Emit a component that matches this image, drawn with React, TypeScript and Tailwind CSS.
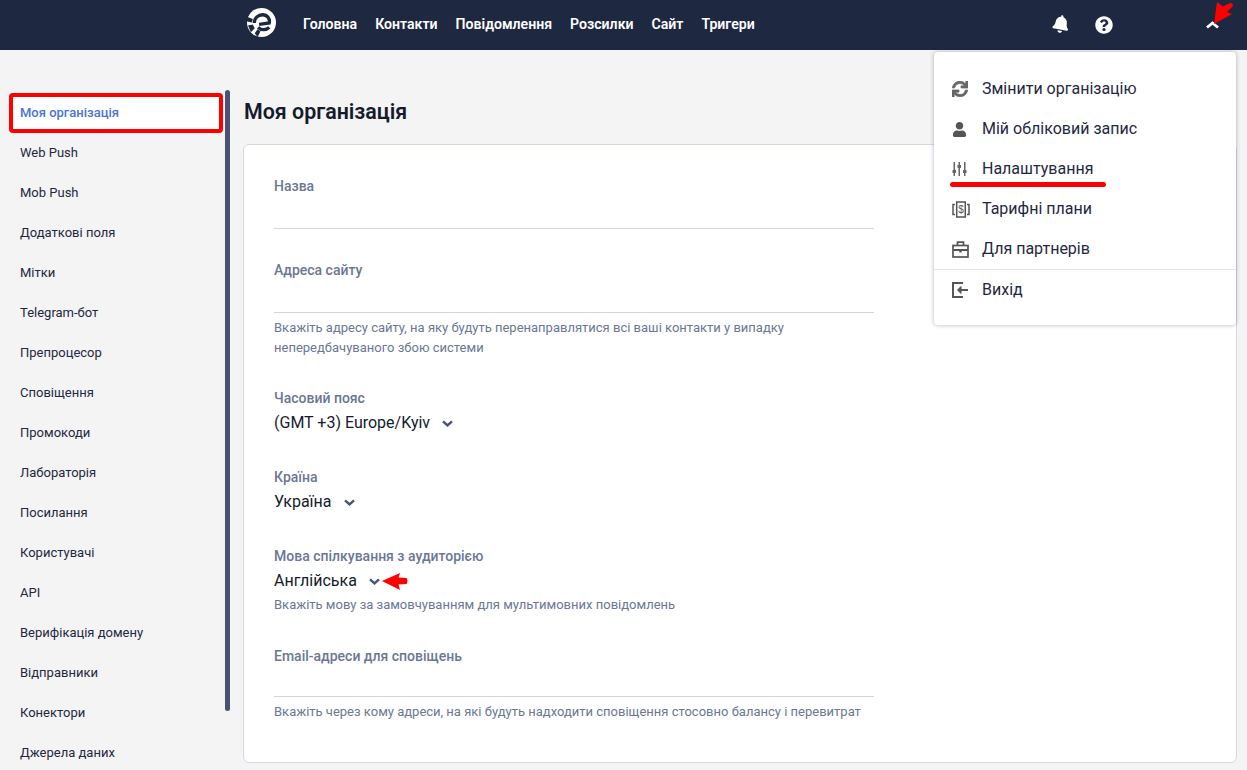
import React from "react";
import { FaBell, FaQuestionCircle, FaSync, FaUser } from "react-icons/fa";

const sideItems = ["Моя організація","Web Push","Mob Push","Додаткові поля","Мітки","Telegram-бот","Препроцесор","Сповіщення","Промокоди","Лабораторія","Посилання","Користувачі","API","Верифікація домену","Відправники","Конектори","Джерела даних"];
const nav = ["Головна","Контакти","Повідомлення","Розсилки","Сайт","Тригери"];

function Logo() {
  return (
    <svg width="29" height="29" viewBox="0 0 30 30" className="shrink-0 mb-[5px]">
      <circle cx="15" cy="15" r="15" fill="#fff" />
      <path d="M7.5 15.5 C7.5 10 12 7 16 7 C21 7 24 11 23 15.5 L12.5 17" fill="none" stroke="#1f2841" strokeWidth="3.4" />
      <path d="M11.5 20 C15 23.5 20 23 23 20" fill="none" stroke="#1f2841" strokeWidth="3.4" />
      <path d="M0 9 L6 11.5 L5 15 L0 14 Z M1 18 L6 17 L8 21 L4 25 Z M8 26 L11 22 L14 24 L11 30 Z" fill="#1f2841" />
    </svg>
  );
}

function Sliders() {
  return (
    <svg width="16" height="14" viewBox="0 0 16 14" fill="#666">
      <rect x="1.5" y="0" width="1.5" height="14" />
      <rect x="6.5" y="0" width="1.5" height="14" />
      <rect x="12" y="0" width="1.5" height="14" />
      <rect x="0.5" y="8" width="3.5" height="3" />
      <rect x="5.5" y="3" width="3.5" height="3" />
      <rect x="11" y="8" width="3.5" height="3" />
    </svg>
  );
}
function Money() {
  return (
    <svg width="18" height="17" viewBox="0 0 18 17" fill="none" stroke="#555" strokeWidth="1.5">
      <rect x="4.7" y="1" width="8.6" height="15" />
      <path d="M3 3.5H1V13.5H3M15 3.5H17V13.5H15" />
      <text x="9" y="12" fontSize="10" fill="#555" stroke="none" textAnchor="middle" fontFamily="Liberation Sans">$</text>
    </svg>
  );
}
function Case() {
  return (
    <svg width="17" height="17" viewBox="0 0 17 17" fill="none" stroke="#555" strokeWidth="1.7">
      <rect x="1" y="4.5" width="15" height="11.5" />
      <path d="M5.5 4.5V1.2H11.5V4.5" />
      <path d="M1 9H16" strokeWidth="2" />
      <rect x="7.3" y="8.5" width="2.4" height="3" fill="#555" stroke="none" />
    </svg>
  );
}
function Exit() {
  return (
    <svg width="17" height="16" viewBox="0 0 17 16" fill="none" stroke="#555" strokeWidth="2">
      <path d="M11 1H1V15H11" />
      <path d="M16 8H7" />
      <path d="M9 4.5L5.5 8L9 11.5Z" fill="#555" strokeWidth="1" />
    </svg>
  );
}
function ChevronDown() {
  return (
    <svg width="11" height="7" viewBox="0 0 11 7" fill="none" stroke="#4a5372" strokeWidth="2.4" className="ml-3 mt-px">
      <path d="M1 1.3L5.5 5.3L10 1.3" />
    </svg>
  );
}

const menu: [React.ReactNode, string][] = [
  [<FaSync size={16} color="#666" stroke="#666" strokeWidth={24} />, "Змінити організацію"],
  [<FaUser size={15} color="#555" />, "Мій обліковий запис"],
  [<Sliders />, "Налаштування"],
  [<Money />, "Тарифні плани"],
  [<Case />, "Для партнерів"],
];

function Label({ children }: { children: React.ReactNode }) {
  return <div className="text-sm leading-5 font-medium text-[#6b7794]">{children}</div>;
}
function Hint({ children }: { children: React.ReactNode }) {
  return <div className="text-[13px] leading-5 text-[#6b7794]">{children}</div>;
}
function Select({ value }: { value: string }) {
  return (
    <div className="mt-[2px] flex h-[26px] items-center text-base text-[#151b2c]">
      <span>{value}</span>
      <ChevronDown />
    </div>
  );
}

export default function App() {
  return (
    <div className="relative h-[770px] w-[1247px] overflow-hidden bg-[#f4f4f4] text-[#1f2841] font-['Roboto','Liberation_Sans',sans-serif]">
      <header className="flex h-[50px] items-center bg-[#1f2841] pl-[247px] pr-[28px] text-white">
        <Logo />
        <nav className="ml-[27px] flex gap-[18px] text-[14.1px] font-semibold">
          {nav.map((n) => <span key={n}>{n}</span>)}
        </nav>
        <div className="ml-auto flex items-center">
          <FaBell size={18} className="rotate-[10deg] mb-[3px]" />
          <FaQuestionCircle size={18} className="ml-[25px] mb-[1px]" />
          <svg width="13" height="8" viewBox="0 0 13 8" fill="none" stroke="#fff" strokeWidth="2.8" className="ml-[93px]">
            <path d="M1 6.5L6.5 2L12 6.5" />
          </svg>
        </div>
      </header>

      <div className="flex">
        <aside className="relative h-[720px] w-[243px] shrink-0 overflow-hidden pl-[9px] pt-[43px]">
          <div className="w-[214px]">
            {sideItems.map((s, i) =>
              i === 0 ? (
                <div key={s} className="flex h-10 items-center rounded-sm border-4 border-[#ff0000] bg-white pl-[7px] pb-px text-[13px] font-medium text-[#4a74d4]">
                  {s}
                </div>
              ) : (
                <div key={s} className="flex h-10 items-center pl-[11px] pb-px text-[13px]">
                  {s}
                </div>
              )
            )}
          </div>
          <div className="absolute left-[225px] top-[40px] h-[621px] w-[5px] rounded-sm bg-[#4a5274]" />
        </aside>

        <main className="flex-1 pr-[10px]">
          <h1 className="mt-[48px] h-[46px] pl-px text-[21.4px] leading-7 font-semibold text-[#151b2c]">Моя організація</h1>
          <section className="h-[619px] rounded-md border border-[#d5d8e3] bg-white pl-[30px] pt-[31px]">
            <div className="w-[600px]">
              <Label>Назва</Label>
              <div className="mt-[32px] border-b border-[#d0d4e0]" />
              <div className="mt-[31px]"><Label>Адреса сайту</Label></div>
              <div className="mt-[32px] border-b border-[#d0d4e0]" />
              <div className="mt-[5px]"><Hint>Вкажіть адресу сайту, на яку будуть перенаправлятися всі ваші контакти у випадку непередбачуваного збою системи</Hint></div>
              <div className="mt-[30px]"><Label>Часовий пояс</Label></div>
              <Select value="(GMT +3) Europe/Kyiv" />
              <div className="mt-[31px]"><Label>Країна</Label></div>
              <Select value="Україна" />
              <div className="mt-[31px]"><Label>Мова спілкування з аудиторією</Label></div>
              <Select value="Англійська" />
              <div className="mt-px"><Hint>Вкажіть мову за замовчуванням для мультимовних повідомлень</Hint></div>
              <div className="mt-[31px]"><Label>Email-адреси для сповіщень</Label></div>
              <div className="mt-[30px] border-b border-[#d0d4e0]" />
              <div className="mt-[5px]"><Hint>Вкажіть через кому адреси, на які будуть надходити сповіщення стосовно балансу і перевитрат</Hint></div>
            </div>
          </section>
        </main>
      </div>

      {/* dropdown menu over content */}
      <div className="absolute left-[934px] top-[52px] h-[273px] w-[302px] rounded-[4px] bg-white pt-[17px] shadow-[0_0_4px_rgba(30,40,70,0.35)]">
        {menu.map(([icon, text]) => (
          <div key={text} className="flex h-10 items-center">
            <div className="flex w-[48px] pl-[18px]">{icon}</div>
            <span className="text-base text-[#1f2841]">{text}</span>
          </div>
        ))}
        <div className="border-t border-[#e2e4ec]" />
        <div className="flex h-10 items-center">
          <div className="flex w-[48px] pl-[18px]"><Exit /></div>
          <span className="text-base text-[#1f2841]">Вихід</span>
        </div>
      </div>

      {/* annotations */}
      <div className="absolute left-[950px] top-[182px] h-[5px] w-[156px] rounded-full bg-[#ff0000]" />
      <svg className="absolute left-[380px] top-[570px]" width="30" height="22" viewBox="0 0 30 22">
        <path d="M2 11 L20 3 L18.5 7.5 L26.5 8 Q28.5 11 26.5 14 L18.5 14.5 L20 20 Z" fill="#ff0000" />
      </svg>
      <svg className="absolute left-[1205px] top-[0px]" width="32" height="28" viewBox="0 0 32 28">
        <path d="M9 24 L12 2 L18 6.5 L25 3 Q28 3 28 6 L22 12 L27 14 Z" fill="#ff0000" />
      </svg>
    </div>
  );
}
